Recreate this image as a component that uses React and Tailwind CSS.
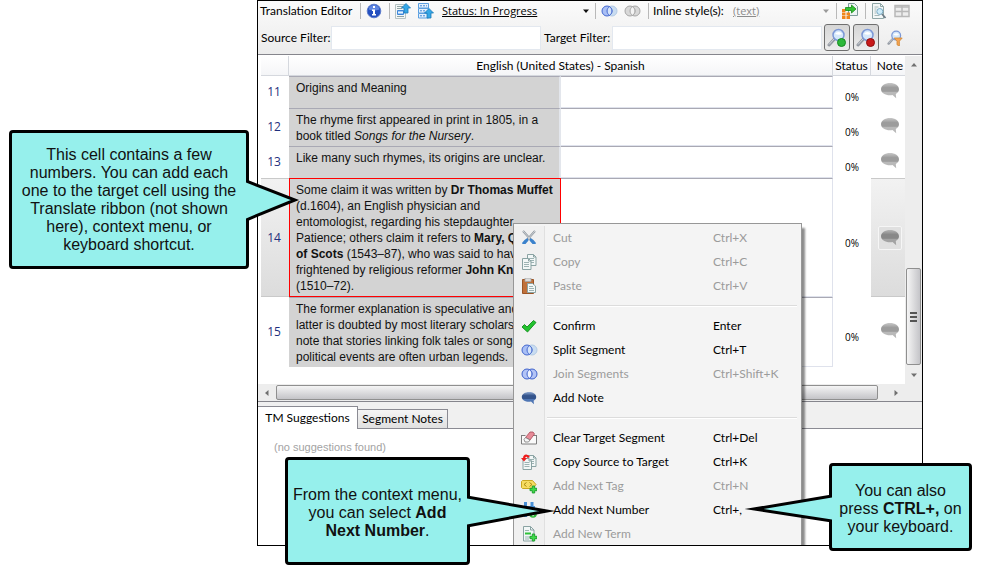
import React from "react";

const UI = "font-['Lato','Open_Sans',sans-serif]";
const ARIAL = "font-['Liberation_Sans',Arial,sans-serif]";

/* ---------- icons ---------- */

function Icon({ size = 16, children }) {
  return (
    <svg width={size} height={size} viewBox="0 0 16 16" className="block shrink-0" aria-hidden="true">
      {children}
    </svg>
  );
}

function InfoIcon() {
  return (
    <Icon>
      <circle cx="8" cy="8" r="6.800" fill="#2450c0" stroke="#5d7ccc" />
      <path d="M2.500 6.500a5.600 5.600 0 0 1 11 0q-5.500 2-11 0z" fill="#6e94ea" opacity=".8" />
      <path d="M7 3h2v2H7zM6 6.500h3V11h1v1.500H6V11h1V8H6z" fill="#fff" />
    </Icon>
  );
}

function UpArrow({ x, y }) {
  return (
    <path
      transform={`translate(${x} ${y})`}
      d="M4.500 0.500l4.500 4.500H6.500v5h-4V5H0z"
      fill="#35a7e6"
      stroke="#1979b8"
      strokeWidth=".8"
    />
  );
}

function SegmentTopIcon() {
  return (
    <Icon>
      <path d="M.5 1.500h10v14H.5z" fill="#f4f7f7" stroke="#b5c2c2" />
      <path d="M2 3.500h6M2 5.500h5" stroke="#8fa3a3" />
      <path d="M2.500 7.500h6v4h-6z" fill="#9cc8f5" stroke="#3f86d8" />
      <path d="M3 9.500h5" stroke="#e8f3fd" />
      <path d="M2 13.500h7" stroke="#8fa3a3" />
      <UpArrow x={6.5} y={0} />
    </Icon>
  );
}

function SegmentUpIcon() {
  return (
    <Icon>
      <path d="M.5 .5h10v4.500H.5z" fill="#e4f0fc" stroke="#5b9fe0" />
      <path d="M.5 5.500h10v4.500H.5z" fill="#e4f0fc" stroke="#5b9fe0" />
      <path d="M.5 10.500h10v4.500H.5z" fill="#e4f0fc" stroke="#5b9fe0" />
      <path d="M2 2.800h7M2 7.800h6M2 12.800h5" stroke="#3f86d8" strokeDasharray="2 1" />
      <UpArrow x={6.5} y={5} />
    </Icon>
  );
}

function Rings({ left, right, mid, stroke, rightStroke }) {
  return (
    <svg width="17" height="16" viewBox="0 0 17 16" className="block shrink-0" aria-hidden="true">
      <circle cx="11" cy="8" r="5" fill={right} stroke={rightStroke || stroke} />
      <circle cx="6" cy="8" r="5" fill={left} stroke={stroke} />
      <path d="M8.500 3.700a5 5 0 0 1 0 8.600a5 5 0 0 1 0-8.600z" fill={mid} stroke={stroke} />
    </svg>
  );
}
const SplitIcon = () => <Rings left="#a9bff5" right="#c9dcf0" mid="#d5e4fa" stroke="#4468cf" rightStroke="#b3cbe6" />;
const JoinIcon = () => <Rings left="#b3c4f6" right="#b3c4f6" mid="#eef3ff" stroke="#3f62cc" />;
const JoinGrayIcon = () => <Rings left="#d8d8d8" right="#d8d8d8" mid="#f4f4f4" stroke="#a6a6a6" />;

function ExportIcon() {
  return (
    <Icon>
      <path d="M6.500 .5h6l3 3v9h-9z" fill="#eef4f4" stroke="#7f9c9c" />
      <path d="M0 6h3.500v3H0zM0 9.500h3.500v3H0zM0 13h3.500v3H0zM4.500 9.500H8v3H4.500zM4.500 13H8v3H4.500z" fill="#f0861a" />
      <path d="M3.500 4.500h6V2L14 6l-4.500 4V7.500h-6z" fill="#34c234" stroke="#178a17" strokeWidth=".8" />
    </Icon>
  );
}

function PreviewIcon() {
  return (
    <Icon>
      <path d="M1.500 .5h8l3 3v12h-11z" fill="#f3f7f7" stroke="#8fa6a6" />
      <path d="M9.500 .5v3h3" fill="none" stroke="#8fa6a6" />
      <path d="M3.500 4h4M3.500 6h2M3.500 8h1.500M3.500 10h2M3.500 12.500h5" stroke="#a4b8b8" />
      <circle cx="8.800" cy="8.500" r="3" fill="#cdebf8" stroke="#7aaac4" />
      <path d="M11 11l3.500 4" stroke="#6d7c86" strokeWidth="1.800" />
    </Icon>
  );
}

function GridIcon() {
  return (
    <Icon>
      <path d="M1 2.500h14v11H1z" fill="#ededed" stroke="#b8b8b8" strokeWidth="1.500" />
      <path d="M1 4h14M8 3v10.500M1 8.500h14" stroke="#b8b8b8" strokeWidth="1.500" />
    </Icon>
  );
}

function Magnifier({ children, size = 20 }) {
  return (
    <svg width={size} height={size} viewBox="0 0 20 20" className="block shrink-0" aria-hidden="true">
      <path d="M7.500 11L2 17" stroke="#9399a2" strokeWidth="3" strokeLinecap="round" />
      <path d="M7 11L2 16.500" stroke="#d3d7dd" strokeWidth="1" />
      <circle cx="11.500" cy="7" r="5.500" fill="#d5e8fb" stroke="#7c98d6" strokeWidth="1.500" />
      <path d="M8 6a4 4 0 0 1 7 0q-3 1.500-7 0z" fill="#fff" />
      {children}
    </svg>
  );
}

function NoteBubble({ id, top, mid, bottom, w = 20, h = 17 }) {
  return (
    <svg width={w} height={h} viewBox="0 0 20 17" className="block shrink-0" aria-hidden="true">
      <defs>
        <linearGradient id={id} x1="0" y1="0" x2="0" y2="1">
          <stop offset="0" stopColor={top} />
          <stop offset=".3" stopColor={mid} />
          <stop offset=".55" stopColor={mid} />
          <stop offset=".6" stopColor={bottom} />
          <stop offset="1" stopColor={bottom} />
        </linearGradient>
      </defs>
      <path
        d="M10 1c5 0 9 2.600 9 6.200 0 2-1.200 3.600-3.200 4.800l.4 4.200-3.700-3.200c-.8.200-1.600.2-2.500.2-5 0-9-2.500-9-6S5 1 10 1z"
        fill={`url(#${id})`}
      />
    </svg>
  );
}

const CutIcon = () => (
  <Icon>
    <path d="M2 1l9 10M14 1L5 11" stroke="#8d959c" strokeWidth="2" />
    <path d="M2 1l8 9M14 1L6 10" stroke="#e1e5e8" strokeWidth=".8" />
    <path d="M6.500 8l1 2.500-3 3.500H1.500l-.5-1 2.500-3zM9.500 8l-1 2.500 3 3.500h3l.5-1-2.500-3z" fill="#3b82cc" />
  </Icon>
);

function PageShape({ x = 0, y = 0 }) {
  return (
    <g transform={`translate(${x} ${y})`}>
      <path d="M.5 .5h6l2.500 2.500v8.500H.5z" fill="#f2f7f7" stroke="#8aa3a3" />
      <path d="M6.500 .5v2.500H9" fill="none" stroke="#8aa3a3" />
      <path d="M2 4.500h5M2 6.500h5M2 8.500h5" stroke="#9db3b3" />
    </g>
  );
}

const CopyIcon = () => (
  <Icon>
    <PageShape x={6} y={0} />
    <PageShape x={1} y={4} />
  </Icon>
);
const PasteIcon = () => (
  <Icon>
    <path d="M1.500 1.500h11v14h-11z" fill="#c0703a" stroke="#9a5426" />
    <path d="M4 0h6v3.500H4z" fill="#dcdcdc" stroke="#a5a5a5" strokeWidth=".8" />
    <path d="M6.500 5.500h5l3 2.500v6.500h-8z" fill="#f4f8f8" stroke="#8aa3a3" />
    <path d="M8 8.500h4M8 10.500h5M8 12.500h5" stroke="#9db3b3" />
  </Icon>
);
const ConfirmIcon = () => (
  <Icon>
    <path d="M1 9L3.500 6.500l2.500 2.500L12.500 2.500 15 4.500 6.500 14z" fill="#22c32e" stroke="#118a1c" strokeWidth=".9" />
  </Icon>
);
const ClearIcon = () => (
  <Icon>
    <path d="M.5 5v9h15V5" fill="#fafafa" stroke="#7e7e7e" />
    <path d="M.5 5.500h4M12 5.500h3.500" stroke="#7e7e7e" />
    <path d="M4.500 7.500l4.500-5.500h3l1.500 2-4.500 6z" fill="#e78b98" stroke="#a84855" strokeWidth=".8" />
    <path d="M3 9.500l1.500-2 4.500 2.500-1.500 2H4z" fill="#f6f6f6" stroke="#777" strokeWidth=".8" />
  </Icon>
);
const CopySourceIcon = () => (
  <Icon>
    <PageShape x={6} y={1} />
    <PageShape x={1.5} y={4} />
    <path d="M8 3.500C6.500 .8 3.500 .8 3 4" fill="none" stroke="#ee1c1c" strokeWidth="2.200" />
    <path d="M0 4h6L3 7.500z" fill="#ee1c1c" />
  </Icon>
);
const Plus = () => (
  <path d="M11.300 8h2.400v2.300H16v2.400h-2.300V15h-2.400v-2.300H9v-2.400h2.300z" fill="#3fdc4a" stroke="#1b9a2a" strokeWidth=".9" />
);
const TagIcon = () => (
  <Icon>
    <path d="M1.500 2.500h10l3.500 4-3 4H1.500l-1-1v-6z" fill="#f6dc62" stroke="#c9a722" />
    <path d="M5.500 4.500L3 6.500l2.500 2M8.500 4.500L11 6.500l-2.500 2" fill="none" stroke="#a88a12" />
    <Plus />
  </Icon>
);
const NumberIcon = () => (
  <Icon>
    <path d="M4.500 0v15M11 0v9" stroke="#4a90d6" strokeWidth="3" />
    <path d="M1 5h13M1 11h8" stroke="#4a90d6" strokeWidth="2" />
    <circle cx="12" cy="12" r="3.800" fill="#2fb83a" />
    <path d="M12 9.800v4.400M9.800 12h4.400" stroke="#fff" strokeWidth="1.200" />
  </Icon>
);
const TermIcon = () => (
  <Icon>
    <path d="M2.500 .5h7l3.500 3.500v11h-10.500z" fill="#f2f7f7" stroke="#8aa3a3" />
    <path d="M9.500 .5v3.500H13" fill="none" stroke="#8aa3a3" />
    <path d="M4 4.500h4M4 11h5M4 13h4" stroke="#9db3b3" />
    <path d="M4 6.500h6v2H4z" fill="#2fc23a" />
    <Plus />
  </Icon>
);
const AddNoteIcon = () => <NoteBubble id="note-menu" top="#8fa9d2" mid="#34548c" bottom="#4f76b4" w={16} h={14} />;

function Arrow({ d, color = "#707070" }) {
  return (
    <svg width="8" height="8" viewBox="0 0 8 8" className="block shrink-0" aria-hidden="true">
      <path d={d} fill={color} />
    </svg>
  );
}
const DOWN = "M1 2.500h6L4 6z";
const UP = "M1 5.500h6L4 2z";
const LEFT = "M5.500 1v6L2 4z";
const RIGHT = "M2.500 1v6L6 4z";

/* ---------- toolbar ---------- */

const Divider = () => <span className="h-4 w-px shrink-0 bg-[#b9b9b9]" />;

function IconButton({ label, children }) {
  return (
    <button type="button" aria-label={label} className="block shrink-0">
      {children}
    </button>
  );
}

function Picker({ label, value, className, arrow }) {
  return (
    <span className={"relative flex shrink-0 items-center font-['Open_Sans',sans-serif] " + className}>
      <select aria-label={label} className="w-full appearance-none bg-transparent p-0 text-[11px] underline outline-none">
        <option>{value}</option>
      </select>
      <span className="pointer-events-none absolute right-0">
        <Arrow d={DOWN} color={arrow} />
      </span>
    </span>
  );
}

function Toolbar() {
  return (
    <div className="flex h-5 items-center pl-[2px] whitespace-nowrap">
      <span className="w-[100px] shrink-0 text-xs">Translation Editor</span>
      <Divider />
      <div className="px-[5px] pr-[7px]">
        <IconButton label="Information"><InfoIcon /></IconButton>
      </div>
      <Divider />
      <div className="flex gap-[7px] pr-2 pl-[5px]">
        <IconButton label="Go to top segment"><SegmentTopIcon /></IconButton>
        <IconButton label="Go to previous segment"><SegmentUpIcon /></IconButton>
      </div>
      <Picker label="Segment status" value="Status: In Progress" className="mr-[5px] w-[148px]" arrow="#111" />
      <Divider />
      <div className="flex gap-[6px] px-[5px] pr-[7px]">
        <IconButton label="Split segment"><SplitIcon /></IconButton>
        <IconButton label="Join segments"><JoinGrayIcon /></IconButton>
      </div>
      <Divider />
      <span className="w-[84px] shrink-0 pl-1 text-xs">Inline style(s):</span>
      <Picker label="Inline style" value="(text)" className="mr-[6px] w-[97px] text-[#8c8c8c]" arrow="#9a9a9a" />
      <Divider />
      <div className="px-[5px] pr-[7px]">
        <IconButton label="Export"><ExportIcon /></IconButton>
      </div>
      <Divider />
      <div className="flex gap-[7px] pl-[5px]">
        <IconButton label="Preview"><PreviewIcon /></IconButton>
        <IconButton label="Layout"><GridIcon /></IconButton>
      </div>
    </div>
  );
}

function FilterButton({ label, pressed, children }) {
  return (
    <button
      type="button"
      aria-label={label}
      className={
        "flex h-[27px] w-[26px] shrink-0 items-center justify-center rounded-[3px] " +
        (pressed ? "border border-[#6f6f6f] bg-linear-to-b from-[#d6d6d6] to-[#ececec]" : "")
      }
    >
      {children}
    </button>
  );
}

function Filters() {
  return (
    <div className="flex h-[33px] items-center pl-[3px] text-xs whitespace-nowrap">
      <label htmlFor="source-filter" className="w-[70px] shrink-0">Source Filter:</label>
      <input id="source-filter" className="h-6 min-w-0 flex-1 border border-[#e3e8ef] bg-white px-1 outline-none" />
      <label htmlFor="target-filter" className="w-[71px] shrink-0 pl-[3px]">Target Filter:</label>
      <input id="target-filter" className="h-6 min-w-0 flex-1 border border-[#e3e8ef] bg-white px-1 outline-none" />
      <div className="flex gap-[3px] pr-[14px] pl-[2px]">
        <FilterButton label="Apply filter" pressed>
          <Magnifier><circle cx="14.500" cy="14.500" r="4" fill="#2db83a" stroke="#158a20" /></Magnifier>
        </FilterButton>
        <FilterButton label="Clear filter" pressed>
          <Magnifier><circle cx="14.500" cy="14.500" r="4" fill="#c81818" stroke="#8e0c0c" /></Magnifier>
        </FilterButton>
        <FilterButton label="Advanced filter">
          <Magnifier size={16}>
            <path d="M9 10h10l-3.500 4v6l-3-1.500V14z" fill="#f6a552" stroke="#d08836" />
          </Magnifier>
        </FilterButton>
      </div>
    </div>
  );
}

/* ---------- segment grid ---------- */

const segments = [
  { id: 11, text: <>Origins and Meaning</> },
  { id: 12, text: <>The rhyme first appeared in print in 1805, in a<br />book titled <i>Songs for the Nursery</i>.</> },
  { id: 13, text: <>Like many such rhymes, its origins are unclear.</> },
  {
    id: 14,
    active: true,
    text: (
      <>
        Some claim it was written by <b>Dr Thomas Muffet</b><br />
        (d.1604), an English physician and<br />
        entomologist, regarding his stepdaughter,<br />
        Patience; others claim it refers to <b>Mary, Queen</b><br />
        <b>of Scots</b> (1543–87), who was said to have been<br />
        frightened by religious reformer <b>John Knox</b><br />
        (1510–72).
      </>
    ),
  },
  {
    id: 15,
    text: (
      <>
        The former explanation is speculative and the<br />
        latter is doubted by most literary scholars who<br />
        note that stories linking folk tales or songs to<br />
        political events are often urban legends.
      </>
    ),
  },
];

function SegmentRow({ id, text, active }) {
  const gray = active ? "border-y border-[#c9c9c9] bg-linear-to-b from-[#f2f2f2] to-[#dcdcdc]" : "";
  return (
    <tr className="h-8">
      <td className={"p-0 pr-[2px] text-center font-['Open_Sans',sans-serif] text-xs text-[#1f2f7d] " + gray}>{id}</td>
      <td
        className={
          "bg-[#d3d3d3] p-0 align-top " +
          (active ? "border border-[#f00]" : "border-t border-r-2 border-t-[#a9a9b4] border-r-[#e3e6ec] pl-px")
        }
      >
        <div className={"overflow-hidden pt-[3px] pb-[2px] pl-[6px] text-xs leading-4 whitespace-nowrap text-[#111] " + ARIAL}>{text}</div>
      </td>
      <td className="border-t border-r border-b border-t-[#a9a9b4] border-r-[#dfe2ec] border-b-[#dfe2ec] p-0" />
      <td className="p-0 pt-[10px] text-center font-['Open_Sans',sans-serif] text-[10px] leading-4">0%</td>
      <td className={"p-0 pl-1 " + gray}>
        <button
          type="button"
          aria-label={"Note for segment " + id}
          className={"mx-auto flex size-6 items-center justify-center rounded-[2px] " + (active ? "border border-[#f6f6f6] bg-[#e0e0e0]" : "mb-1")}
        >
          <NoteBubble
            id={"note-" + id}
            top={active ? "#b4b4b4" : "#c8c8c8"}
            mid={active ? "#888888" : "#9c9c9c"}
            bottom={active ? "#a3a3a3" : "#b9b9b9"}
          />
        </button>
      </td>
    </tr>
  );
}

function Grid() {
  return (
    <div className="flex bg-white pt-px">
      <div className="min-w-0 flex-1 pb-[17px] pl-[3px]">
        <table className="w-full table-fixed border-separate border-spacing-0">
          <colgroup>
            <col className="w-[28px]" />
            <col />
            <col />
            <col className="w-[38px]" />
            <col className="w-[34px]" />
          </colgroup>
          <thead>
            <tr className="h-5 bg-linear-to-b from-white to-[#f4f5f7] text-xs leading-[19px]">
              <th aria-label="Number" className="border-r border-b border-[#d5d8de] p-0" />
              <th colSpan={2} className="border-r border-b border-[#d5d8de] p-0 font-normal">English (United States) - Spanish</th>
              <th className="border-r border-b border-[#d5d8de] p-0 font-normal">Status</th>
              <th className="border-b border-[#d5d8de] p-0 pl-1 font-normal">Note</th>
            </tr>
          </thead>
          <tbody>
            {segments.map((s) => <SegmentRow key={s.id} {...s} />)}
          </tbody>
        </table>
      </div>
      <div className="flex w-[17px] shrink-0 flex-col items-center bg-[#ededed]">
        <button type="button" aria-label="Scroll up" className="flex h-[17px] items-center"><Arrow d={UP} /></button>
        <div className="flex-1" />
        <div className="flex h-[97px] w-[15px] flex-col items-center justify-center gap-[2px] rounded-[2px] border border-[#8f8f8f] bg-linear-to-r from-[#f5f5f5] to-[#c4c4c8]">
          <span className="h-[2px] w-[7px] bg-[#555]" />
          <span className="h-[2px] w-[7px] bg-[#555]" />
          <span className="h-[2px] w-[7px] bg-[#555]" />
        </div>
        <button type="button" aria-label="Scroll down" className="flex h-[19px] items-center"><Arrow d={DOWN} /></button>
      </div>
    </div>
  );
}

function HorizontalScroll() {
  return (
    <div className="flex h-[17px] items-center bg-[#ededed] pr-[17px]">
      <button type="button" aria-label="Scroll left" className="flex w-[18px] justify-center"><Arrow d={LEFT} /></button>
      <div className="h-[15px] flex-1 rounded-[2px] border border-[#8f8f8f] bg-linear-to-b from-[#f5f5f5] to-[#c4c4c8]" />
      <button type="button" aria-label="Scroll right" className="flex w-[27px] justify-center pl-2"><Arrow d={RIGHT} /></button>
    </div>
  );
}

function Suggestions() {
  return (
    <div className="border-t border-[#85858c] bg-[#f0f0f0]">
      <div role="tablist" className="relative flex items-end pt-1 text-xs">
        <span className="absolute inset-x-0 bottom-0 h-px bg-[#8b8b93]" />
        <button type="button" role="tab" aria-selected="true" className="relative h-[23px] w-[100px] border-t border-r border-[#8b8b93] bg-white">TM Suggestions</button>
        <button type="button" role="tab" aria-selected="false" className="relative h-5 w-[90px] border-y border-r border-[#8b8b93] bg-linear-to-b from-[#f5f5f5] to-[#e0e0e0]">Segment Notes</button>
      </div>
      <div className={"h-[116px] bg-white pt-[10px] pl-4 text-[11px] text-[#a3a3a3] " + ARIAL}>(no suggestions found)</div>
    </div>
  );
}

/* ---------- context menu ---------- */

const menuGroups = [
  [
    { icon: CutIcon, label: "Cut", keys: "Ctrl+X", off: true },
    { icon: CopyIcon, label: "Copy", keys: "Ctrl+C", off: true },
    { icon: PasteIcon, label: "Paste", keys: "Ctrl+V", off: true },
  ],
  [
    { icon: ConfirmIcon, label: "Confirm", keys: "Enter" },
    { icon: SplitIcon, label: "Split Segment", keys: "Ctrl+T" },
    { icon: JoinIcon, label: "Join Segments", keys: "Ctrl+Shift+K", off: true },
    { icon: AddNoteIcon, label: "Add Note", keys: "" },
  ],
  [
    { icon: ClearIcon, label: "Clear Target Segment", keys: "Ctrl+Del" },
    { icon: CopySourceIcon, label: "Copy Source to Target", keys: "Ctrl+K" },
    { icon: TagIcon, label: "Add Next Tag", keys: "Ctrl+N", off: true },
    { icon: NumberIcon, label: "Add Next Number", keys: "Ctrl+," },
    { icon: TermIcon, label: "Add New Term", keys: "", off: true },
  ],
];

function ContextMenu() {
  return (
    <div
      role="menu"
      className="absolute top-[222px] left-[255px] w-[289px] border border-[#979797] bg-[#f4f4f4] py-[2px] shadow-[3px_5px_2px_rgba(0,0,0,0.45)]"
    >
      {menuGroups.map((group, g) => (
        <React.Fragment key={g}>
          {g > 0 && (
            <div className="flex h-4">
              <span className="w-[31px] border-r border-[#e0e0e0] bg-[#f0f0f0]" />
              <span className="mt-[7px] mr-1 ml-[2px] h-[2px] flex-1 border-t border-[#dcdcdc] bg-white" />
            </div>
          )}
          {group.map(({ icon: Glyph, label, keys, off }) => (
            <button
              key={label}
              type="button"
              role="menuitem"
              disabled={off}
              className={"flex h-6 w-full items-center text-left text-xs " + (off ? "text-[#9b9b9b]" : "text-black")}
            >
              <span className="flex h-6 w-[31px] items-center justify-center border-r border-[#e0e0e0] bg-[#f0f0f0]"><Glyph /></span>
              <span className="w-[168px] pl-2">{label}</span>
              <span>{keys}</span>
            </button>
          ))}
        </React.Fragment>
      ))}
    </div>
  );
}

/* ---------- callouts ---------- */

function Callout({ className, tailClass, w, h, points, children }) {
  return (
    <div className={"absolute flex items-center justify-center rounded-[4px] border-3 border-black bg-[#96f0ec] text-center text-base leading-[18px] whitespace-nowrap text-[#111] " + ARIAL + " " + className}>
      <p>{children}</p>
      <svg width={w} height={h} className={"absolute " + tailClass} aria-hidden="true">
        <polyline points={points} fill="#96f0ec" stroke="#000" strokeWidth="3" strokeMiterlimit="10" />
      </svg>
    </div>
  );
}

export default function App() {
  return (
    <div className="relative bg-white pr-[58px] pb-[26px] pl-[257px]">
      <main className={"relative overflow-hidden border border-black bg-[#f0f0f0] text-black " + UI}>
        <div className="border-b border-[#85858c] bg-linear-to-b from-[#fbfbfb] to-[#ececec]">
          <Toolbar />
          <Filters />
        </div>
        <Grid />
        <HorizontalScroll />
        <Suggestions />
        <ContextMenu />
      </main>

      <Callout
        className="top-[130px] left-[9px] h-[139px] w-[240px]"
        tailClass="top-[44px] left-[234px]"
        w={56}
        h={48}
        points="0,4 49,23 0,43"
      >
        This cell contains a few<br />numbers. You can add each<br />one to the target cell using the<br />
        Translate ribbon (not shown<br />here), context menu, or<br />keyboard shortcut.
      </Callout>
      <Callout
        className="top-[457px] left-[285px] h-[108px] w-[185px] pt-1"
        tailClass="top-[34px] left-[179px]"
        w={92}
        h={38}
        points="0,3 80,17 0,32"
      >
        From the context menu,<br />you can select <b>Add</b><br /><b>Next Number</b>.
      </Callout>
      <Callout
        className="top-[463px] left-[829px] h-[88px] w-[143px] pt-1"
        tailClass="top-[24px] right-[137px]"
        w={92}
        h={36}
        points="92,6 14,19 92,31"
      >
        You can also<br />press <b>CTRL+,</b> on<br />your keyboard.
      </Callout>
    </div>
  );
}
